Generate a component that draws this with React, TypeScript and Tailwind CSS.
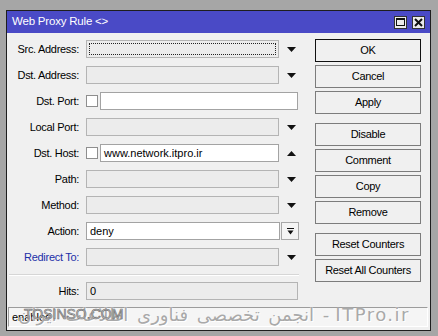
import React from "react"

const font = { fontFamily: '"Liberation Sans", Arial, sans-serif' }

function Down() {
  return (
    <svg width="9" height="5" viewBox="0 0 9 5">
      <path d="M0 0H9L4.5 5Z" fill="#111" />
    </svg>
  )
}

function Up() {
  return (
    <svg width="9" height="5" viewBox="0 0 9 5">
      <path d="M0 5H9L4.5 0Z" fill="#111" />
    </svg>
  )
}

function Field({ white, w, text, focus }: { white?: boolean; w: string; text?: string; focus?: boolean }) {
  return (
    <div
      className={`relative h-[18px] ${w} border ${
        white ? "bg-white border-[#a3a3a3]" : "bg-[#ececec] border-[#b4b4b4]"
      } flex items-center pl-[3px] text-[11px] text-black`}
    >
      {text}
      {focus && <div className="absolute inset-[2px] border border-dotted border-[#222]" />}
    </div>
  )
}

function Row({ label, blue, children }: { label: string; blue?: boolean; children: React.ReactNode }) {
  return (
    <div className="flex items-center h-[18px]">
      <div className={`w-[72px] text-right text-[11px] tracking-[-0.3px] ${blue ? "text-[#1c2fa8]" : "text-black"}`}>
        {label}
      </div>
      <div className="ml-[7px] flex items-center">{children}</div>
    </div>
  )
}

function Arrow({ up }: { up?: boolean }) {
  return <div className="w-[20px] pl-[8px] flex items-center">{up ? <Up /> : <Down />}</div>
}

function Check() {
  return <div className="w-[12px] h-[12px] bg-white border border-[#8e8e8e] mr-[2px]" />
}

function Btn({ label, def }: { label: string; def?: boolean }) {
  return (
    <div
      className={`h-[23px] w-[106px] flex items-center justify-center bg-[#f0f0f0] text-[11px] tracking-[-0.3px] text-black ${
        def ? "border-[1.5px] border-[#111]" : "border border-[#7c7c7c]"
      }`}
    >
      {label}
    </div>
  )
}

export default function App() {
  return (
    <div className="relative w-[438px] h-[336px] bg-[#a6a6a6] pt-[10px] pl-[6px] overflow-hidden" style={font}>
      <div className="w-[425px] h-[321px] border border-[#1e1e1e] bg-[#f0f0f0] flex flex-col">
        {/* title bar */}
        <div className="h-[22px] bg-[#4a4ac6] flex items-center pl-[5px] pr-[5px]">
          <span className="text-white text-[11.5px] tracking-[-0.2px]">Web Proxy Rule &lt;&gt;</span>
          <div className="ml-auto flex gap-[5px]">
            <div className="w-[13px] h-[13px] bg-[#ececec] border border-[#333] flex items-center justify-center">
              <div className="w-[9px] h-[8px] border border-[#111] border-t-2" />
            </div>
            <div className="w-[13px] h-[13px] bg-[#ececec] border border-[#333] flex items-center justify-center">
              <svg width="9" height="9" viewBox="0 0 9 9">
                <path d="M1 1L8 8M8 1L1 8" stroke="#111" strokeWidth="2" />
              </svg>
            </div>
          </div>
        </div>

        {/* body */}
        <div className="flex pt-[6px]">
          <div className="w-[292px] mt-[1px] flex flex-col">
            <div className="flex flex-col gap-[8px]">
              <Row label="Src. Address:">
                <Field w="w-[193px]" focus />
                <Arrow />
              </Row>
              <Row label="Dst. Address:">
                <Field w="w-[193px]" />
                <Arrow />
              </Row>
              <Row label="Dst. Port:">
                <Check />
                <Field white w="w-[198px]" />
              </Row>
              <Row label="Local Port:">
                <Field w="w-[193px]" />
                <Arrow />
              </Row>
              <Row label="Dst. Host:">
                <Check />
                <Field white w="w-[179px]" text="www.network.itpro.ir" />
                <Arrow up />
              </Row>
              <Row label="Path:">
                <Field w="w-[193px]" />
                <Arrow />
              </Row>
              <Row label="Method:">
                <Field w="w-[193px]" />
                <Arrow />
              </Row>
              <Row label="Action:">
                <Field white w="w-[194px]" text="deny" />
                <div className="ml-[1px] w-[18px] h-[18px] border border-[#a8a8a8] bg-[#f4f4f4] flex items-center justify-center">
                  <svg width="7" height="7" viewBox="0 0 7 7">
                    <path d="M0 0.5H7" stroke="#111" strokeWidth="1" />
                    <path d="M0.5 2.5H6.5L3.5 6.5Z" fill="#111" />
                  </svg>
                </div>
              </Row>
              <Row label="Redirect To:" blue>
                <Field w="w-[193px]" />
                <Arrow />
              </Row>
            </div>
            <div className="mt-[8px] ml-[2px] h-[2px] border-t border-[#d6d6d6] border-b border-b-white" />
            <div className="mt-[6px]">
              <Row label="Hits:">
                <Field w="w-[212px]" text="0" />
              </Row>
            </div>
          </div>

          <div className="ml-[16px] flex flex-col">
            <div className="flex flex-col gap-[3px]">
              <Btn label="OK" def />
              <Btn label="Cancel" />
              <Btn label="Apply" />
            </div>
            <div className="mt-[9px] flex flex-col gap-[3px]">
              <Btn label="Disable" />
              <Btn label="Comment" />
              <Btn label="Copy" />
              <Btn label="Remove" />
            </div>
            <div className="mt-[9px] flex flex-col gap-[3px]">
              <Btn label="Reset Counters" />
              <Btn label="Reset All Counters" />
            </div>
          </div>
        </div>

        {/* status bar */}
        <div className="mt-auto mb-[3px] ml-[1px] mr-[2px] h-[20px] border border-t-[#9c9c9c] border-l-[#9c9c9c] border-b-white border-r-white bg-[#f5f5f5] flex items-center pl-[3px]">
          <span className="text-[11px] text-black">enabled</span>
        </div>
      </div>

      {/* watermarks */}
      <div
        dir="rtl"
        className="absolute right-[28px] top-[301px] flex items-baseline text-[#a9a9a9] whitespace-nowrap"
        style={{ fontFamily: '"DejaVu Sans", sans-serif', textShadow: "0 0 1px #fff, 1px 1px 0 #fff" }}
      >
        <span className="text-[18px] tracking-[1.5px]">ITPro.ir</span>
        <span className="text-[18px] [word-spacing:3px] pr-[6px]">- انجمن تخصصی فناوری اطلاعات ایران</span>
      </div>
      <div
        className="absolute left-[24px] top-[304px] text-[14px] text-[#c8c8c8] whitespace-nowrap"
        style={{ WebkitTextStroke: "0.6px #707070" }}
      >
        TOSINSO.COM
      </div>
    </div>
  )
}
